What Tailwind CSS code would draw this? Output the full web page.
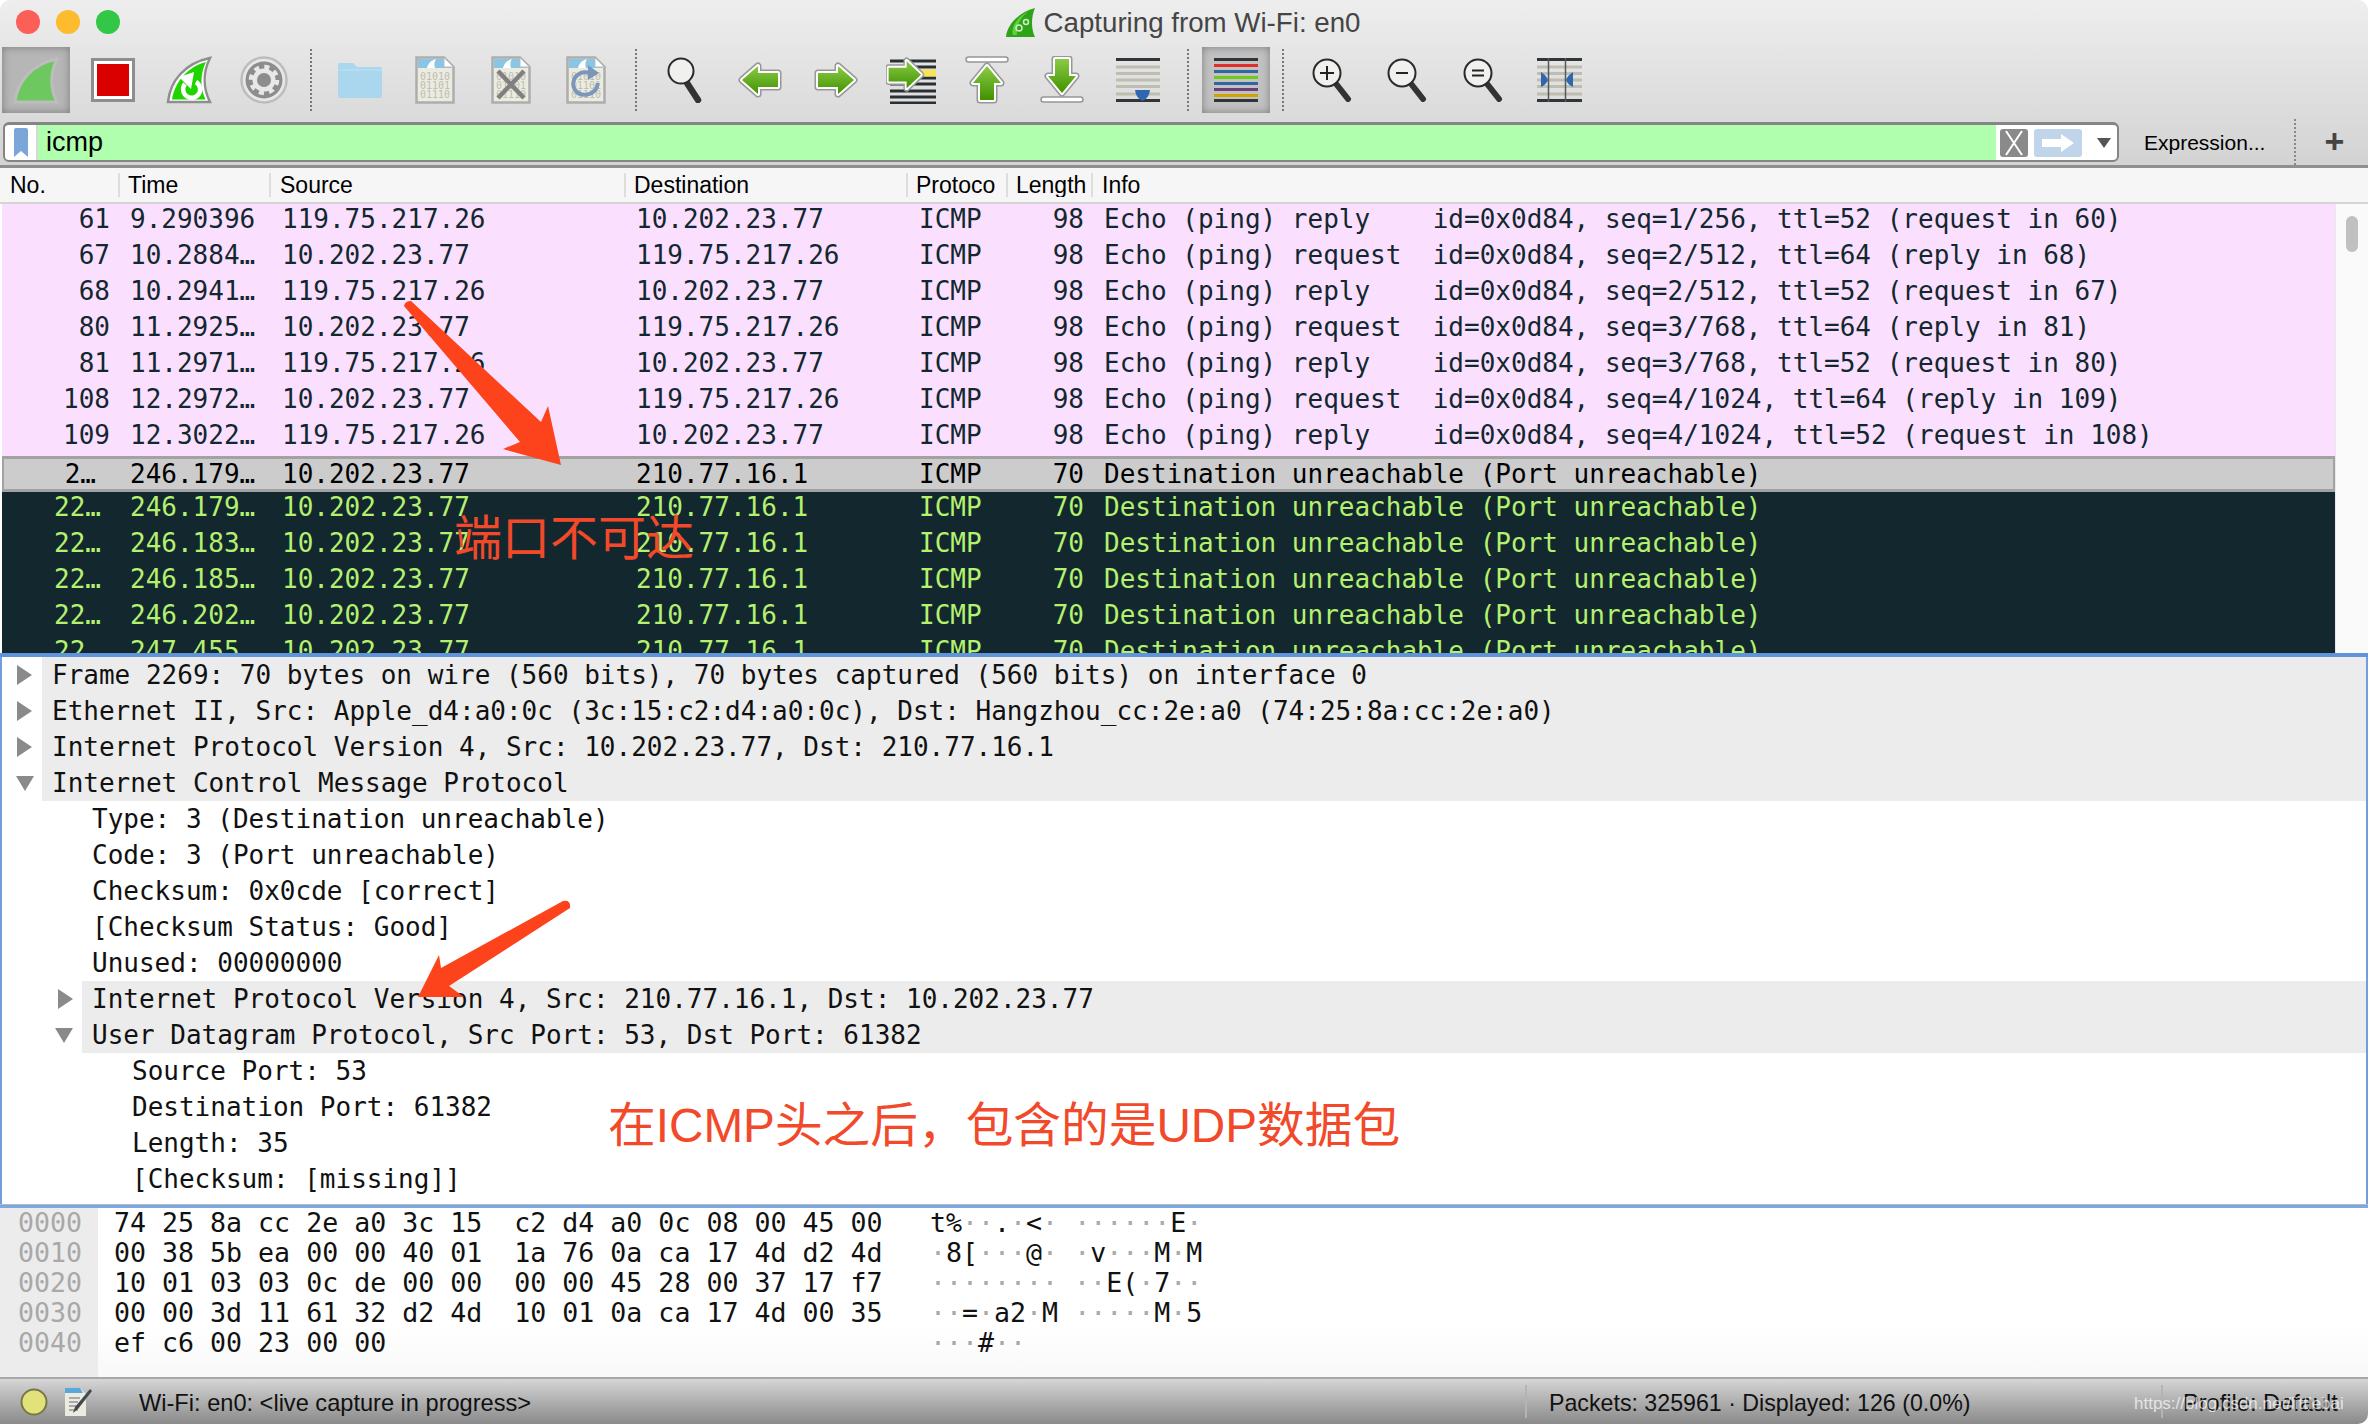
<!DOCTYPE html>
<html lang="en">
<head>
<meta charset="UTF-8">
<title>Capturing from Wi-Fi: en0</title>
<script src="https://cdn.jsdelivr.net/npm/@tailwindcss/browser@4"></script>
</head>
<body class="bg-white overflow-hidden">
<svg class="absolute w-0 h-0">
  <defs>
    <linearGradient id="g" x1="0" y1="0" x2="0" y2="1"><stop offset="0" stop-color="#8ccb45"/><stop offset="1" stop-color="#3f9200"/></linearGradient>
    <path id="al" d="M4 18 L20 4 V11 H40 V25 H20 V32 Z"/>
    <path id="ar" d="M40 18 L24 4 V11 H4 V25 H24 V32 Z"/>
    <path id="au" d="M18 3 L4 20 H11 V37 H25 V20 H32 Z"/>
    <path id="ad" d="M18 37 L4 20 H11 V3 H25 V20 H32 Z"/>
    <symbol id="doc" viewBox="0 0 40 48">
      <path d="M1.5 1.5 H29 L38.5 11 V46.5 H1.5 Z" fill="#ecebdf" stroke="#adadad" stroke-width="2.5"/>
      <path d="M3 3 H28.5 L37 12 H3 Z" fill="#8ac5e6"/>
      <path d="M12 12 C13 7 17 4 21 3 C19 6 19 9 20 12 Z" fill="#fff"/>
      <path d="M29 2 V11 H38" fill="#fff" stroke="#bbb" stroke-width="1"/>
      <text x="5" y="24" font-family="DejaVu Sans Mono" font-size="10" fill="#bdbdb5">01010</text>
      <text x="5" y="33" font-family="DejaVu Sans Mono" font-size="10" fill="#bdbdb5">01101</text>
      <text x="5" y="42" font-family="DejaVu Sans Mono" font-size="10" fill="#bdbdb5">01110</text>
    </symbol>
    <symbol id="mag" viewBox="0 0 42 44">
      <path d="M25 27 L36 41" stroke="#333" stroke-width="6" stroke-linecap="round"/>
      <ellipse cx="15" cy="15" rx="13.5" ry="13.5" fill="#f0f0ee" stroke="#2a2a2a" stroke-width="2"/>
    </symbol>
  </defs>
</svg>

<div class="relative w-[2368px] h-[1424px] flex flex-col overflow-hidden rounded-t-[10px] rounded-br-[10px] font-['Liberation_Sans',sans-serif] text-black">

  <!-- title bar + toolbar -->
  <div class="bg-linear-to-b from-[#eeeeee] to-[#d3d3d3] h-[168px] flex flex-col shrink-0 border-b-[3px] border-[#8f8f8f]">
    <div class="relative h-[47px] flex items-center justify-center">
      <div class="absolute left-[16px] top-[10px] flex gap-[16px]">
        <span class="w-[24px] h-[24px] rounded-full bg-[#fc5f58]"></span>
        <span class="w-[24px] h-[24px] rounded-full bg-[#fdbc2e]"></span>
        <span class="w-[24px] h-[24px] rounded-full bg-[#33c748]"></span>
      </div>
      <div class="flex items-center gap-[8px] -ml-[3px] -mt-[2px]">
        <svg width="31" height="32" viewBox="0 0 31 32">
          <path d="M1 30 C2 18 14 5 30 1 C26 10 26 22 30 30 Z" fill="#2ea31a"/>
          <path d="M8 28 C5 20 14 8 24 4 C15 10 11 20 12 28 Z" fill="#5fd03e"/>
          <circle cx="14" cy="21" r="3" fill="none" stroke="#cdeec4" stroke-width="1.5"/>
          <circle cx="21" cy="15" r="2.5" fill="none" stroke="#cdeec4" stroke-width="1.5"/>
        </svg>
        <span class="text-[27.700px] leading-none text-[#454545]">Capturing from Wi-Fi: en0</span>
      </div>
    </div>

    <div class="flex items-center h-[66px]">
      <div class="w-[75.5px] h-[66px] flex items-center justify-center">
        <div class="-ml-[4px] w-[68px] h-[66px] shrink-0 flex items-center justify-center bg-[#b6b6b6] shadow-[inset_0_0_9px_#7d7d7d]">
          <svg width="46" height="47" viewBox="0 0 46 47"><path d="M2 45 C4 25 19 7 44 2 C37 16 37 32 44 45 Z" fill="#6cc85f" stroke="#bdbdbd" stroke-width="3"/></svg>
        </div>
      </div>
      <div class="w-[75.5px] flex justify-center">
        <div class="w-[44px] h-[44px] border-[3px] border-[#8e8e8e] bg-white p-[3px]"><div class="w-full h-full bg-[#da0000]"></div></div>
      </div>
      <div class="w-[75.5px] flex justify-center">
        <svg width="46" height="48" viewBox="0 0 46 48">
          <path d="M2 46 C4 25 19 7 44 2 C37 16 37 32 44 46 Z" fill="#fff" stroke="#8e8e8e" stroke-width="2.5"/>
          <path d="M6 43.500 C9 26 21 11 40 6 C34 18 34 32 39.500 43.500 Z" fill="#20d400"/>
          <path d="M19 27 A8.500 8.500 0 1 0 30 25" fill="none" stroke="#fff" stroke-width="4.500" transform="translate(0,1)"/>
          <path d="M13 21 L28 16 L25 33 Z" fill="#fff"/>
        </svg>
      </div>
      <div class="w-[75.5px] flex justify-center">
        <svg width="48" height="48" viewBox="0 0 48 48">
          <circle cx="24" cy="24" r="22.500" fill="#e8e8e8" stroke="#bdbdbd" stroke-width="2.500"/>
          <circle cx="24" cy="24" r="18.500" fill="#8d8d8d"/>
          <circle cx="24" cy="24" r="11.500" fill="#e8e8e8"/>
          <circle cx="24" cy="24" r="13" fill="none" stroke="#e8e8e8" stroke-width="4.500" stroke-dasharray="5 5.200"/>
          <circle cx="24" cy="24" r="7" fill="#8d8d8d"/>
        </svg>
      </div>
      <div class="ml-[8px] mr-[10px] w-[2px] h-[62px] border-l-2 border-dotted border-[#777777]"></div>

      <div class="w-[75.5px] flex justify-center">
        <svg width="46" height="37" viewBox="0 0 46 37"><path d="M1 3 Q1 1 3 1 H16 L20 5 H43 Q45 5 45 7 V34 Q45 36 43 36 H3 Q1 36 1 34 Z" fill="#aad6ee"/><path d="M1 9 H45 V7 H1 Z" fill="#b5dcf1"/></svg>
      </div>
      <div class="w-[75.5px] flex justify-center"><svg width="40" height="48"><use href="#doc"/></svg></div>
      <div class="w-[75.5px] flex justify-center">
        <svg width="40" height="48" viewBox="0 0 40 48"><use href="#doc" width="40" height="48"/><path d="M7 15 L33 42 M33 15 L7 42" stroke="#808080" stroke-width="4.5"/></svg>
      </div>
      <div class="w-[75.5px] flex justify-center">
        <svg width="40" height="48" viewBox="0 0 40 48"><use href="#doc" width="40" height="48"/><path d="M25 17 C10 13 4 26 9 34 C15 42 30 40 32 27" fill="none" stroke="#7a96b8" stroke-width="4"/><path d="M22 9 L33 17 L22 24 Z" fill="#7a96b8"/></svg>
      </div>
      <div class="ml-[11px] mr-[10px] w-[2px] h-[62px] border-l-2 border-dotted border-[#777777]"></div>

      <div class="w-[75.5px] flex justify-center"><svg width="36" height="46" viewBox="0 0 36 46"><path d="M20 26 L31 43" stroke="#333" stroke-width="6.5" stroke-linecap="round"/><ellipse cx="14" cy="14" rx="12.5" ry="12.5" fill="#f0f0ee" stroke="#2a2a2a" stroke-width="2"/></svg></div>
      <div class="w-[75.5px] flex justify-center"><svg width="44" height="36" viewBox="0 0 44 36"><use href="#al" fill="#979797" stroke="#979797" stroke-width="7" stroke-linejoin="round"/><use href="#al" fill="#fff" stroke="#fff" stroke-width="4" stroke-linejoin="round"/><use href="#al" fill="url(#g)"/></svg></div>
      <div class="w-[75.5px] flex justify-center"><svg width="44" height="36" viewBox="0 0 44 36"><use href="#ar" fill="#979797" stroke="#979797" stroke-width="7" stroke-linejoin="round"/><use href="#ar" fill="#fff" stroke="#fff" stroke-width="4" stroke-linejoin="round"/><use href="#ar" fill="url(#g)"/></svg></div>
      <div class="w-[75.5px] flex justify-center">
        <svg width="50" height="48" viewBox="0 0 50 48">
          <path d="M4 5 H50 M4 11 H50 M4 22 H50 M4 28 H50 M4 35 H50 M4 41 H50 M4 47 H50" stroke="#2a2f33" stroke-width="3"/>
          <path d="M4 17 H50" stroke="#f7e35a" stroke-width="7"/>
          <g transform="translate(-1,1) scale(0.9,0.98)"><use href="#ar" fill="#979797" stroke="#979797" stroke-width="7" stroke-linejoin="round"/><use href="#ar" fill="#fff" stroke="#fff" stroke-width="4" stroke-linejoin="round"/><use href="#ar" fill="url(#g)"/></g>
        </svg>
      </div>
      <div class="w-[75.5px] flex justify-center">
        <svg width="44" height="48" viewBox="0 0 44 48"><rect x="1" y="1" width="42" height="5" rx="2.5" fill="#fff" stroke="#979797" stroke-width="1.5"/><g transform="translate(4,7) scale(1,1)"><use href="#au" fill="#979797" stroke="#979797" stroke-width="7" stroke-linejoin="round"/><use href="#au" fill="#fff" stroke="#fff" stroke-width="4" stroke-linejoin="round"/><use href="#au" fill="url(#g)"/></g></svg>
      </div>
      <div class="w-[75.5px] flex justify-center">
        <svg width="44" height="48" viewBox="0 0 44 48"><rect x="1" y="41" width="42" height="5" rx="2.5" fill="#fff" stroke="#979797" stroke-width="1.5"/><g transform="translate(4,0)"><use href="#ad" fill="#979797" stroke="#979797" stroke-width="7" stroke-linejoin="round"/><use href="#ad" fill="#fff" stroke="#fff" stroke-width="4" stroke-linejoin="round"/><use href="#ad" fill="url(#g)"/></g></svg>
      </div>
      <div class="w-[75.5px] flex justify-center">
        <svg width="44" height="44" viewBox="0 0 44 44">
          <path d="M0 1.5 H44 M0 42.5 H44" stroke="#30353a" stroke-width="3"/>
          <path d="M0 9 H44 M0 15.500 H44 M0 22 H44 M0 28.500 H44 M0 36 H44" stroke="#bdbdb0" stroke-width="3"/>
          <path d="M19 32 H34 Q33 40 26.500 43 Q20 40 19 32 Z" fill="#2f66ad"/>
        </svg>
      </div>
      <div class="ml-[11.5px] mr-[9.5px] w-[2px] h-[62px] border-l-2 border-dotted border-[#777777]"></div>

      <div class="w-[75.5px] flex justify-center">
        <div class="w-[68px] h-[66px] flex items-center justify-center bg-[#c2c2c2] shadow-[inset_0_0_9px_#7d7d7d]">
          <svg width="44" height="44" viewBox="0 0 44 44">
            <path d="M0 1.5 H44 M0 42.500 H44" stroke="#30353a" stroke-width="3"/>
            <path d="M0 7.500 H44" stroke="#e22d2d" stroke-width="3"/>
            <path d="M0 13.500 H44" stroke="#33669f" stroke-width="3"/>
            <path d="M0 19.500 H44" stroke="#6fcb1a" stroke-width="3"/>
            <path d="M0 25.500 H44" stroke="#33669f" stroke-width="3"/>
            <path d="M0 31.500 H44" stroke="#6c3f78" stroke-width="3"/>
            <path d="M0 37.500 H44" stroke="#cfa300" stroke-width="3"/>
          </svg>
        </div>
      </div>
      <div class="ml-[8px] mr-[11px] w-[2px] h-[62px] border-l-2 border-dotted border-[#777777]"></div>

      <div class="w-[75.5px] flex justify-center"><svg width="42" height="44" viewBox="0 0 42 44"><use href="#mag" width="42" height="44"/><path d="M15 8 V22 M8 15 H22" stroke="#222" stroke-width="2"/></svg></div>
      <div class="w-[75.5px] flex justify-center"><svg width="42" height="44" viewBox="0 0 42 44"><use href="#mag" width="42" height="44"/><path d="M9 15 H21" stroke="#222" stroke-width="2"/></svg></div>
      <div class="w-[75.5px] flex justify-center"><svg width="42" height="44" viewBox="0 0 42 44"><use href="#mag" width="42" height="44"/><path d="M9 12.500 H21 M9 17.500 H21" stroke="#222" stroke-width="2"/></svg></div>
      <div class="w-[75.5px] flex justify-center">
        <svg width="45" height="44" viewBox="0 0 45 44">
          <path d="M0 9 H45 M0 15.500 H45 M0 22 H45 M0 28.500 H45 M0 36 H45" stroke="#bdbdb0" stroke-width="3"/>
          <path d="M0 1.500 H45 M0 42.500 H45" stroke="#30353a" stroke-width="3"/>
          <path d="M11.500 0 V44 M28.500 0 V44" stroke="#55585a" stroke-width="1.500"/>
          <path d="M4 14 Q9 17 11 22 Q9 27 4 29 Z M36 14 Q31 17 29 22 Q31 27 36 29 Z" fill="#2f66ad"/>
        </svg>
      </div>
    </div>

    <!-- display filter -->
    <div class="relative flex items-center h-[40px] mt-[9px] ml-[3px]">
      <div class="flex items-stretch w-[2116px] h-[40px] rounded-[6px] border-[2px] border-t-[3px] border-[#858585] bg-white overflow-hidden">
        <div class="w-[33px] flex items-center justify-center border-r-2 border-[#d8d8d8]">
          <svg width="16" height="29" viewBox="0 0 16 29"><path d="M1 2 Q1 0 3 0 H13 Q15 0 15 2 V29 L8 23 L1 29 Z" fill="#7ba6d8"/></svg>
        </div>
        <div class="w-[1958px] bg-[#afffaf] pl-[8px] flex items-center text-[27px] leading-none">icmp</div>
        <div class="flex items-center pl-[4px] gap-[6px]">
          <div class="w-[28px] h-[28px] rounded-[3px] bg-[#8a8a8a] flex items-center justify-center">
            <svg width="20" height="26" viewBox="0 0 20 26"><path d="M2 1 L18 25 M18 1 L2 25" stroke="#fff" stroke-width="2"/></svg>
          </div>
          <div class="w-[48px] h-[28px] rounded-[3px] bg-[#c0d4ea] flex items-center justify-center">
            <svg width="34" height="20" viewBox="0 0 34 20"><path d="M1 6 H20 V1 L33 10 L20 19 V14 H1 Z" fill="#fff"/></svg>
          </div>
          <svg class="ml-[9px]" width="14" height="10" viewBox="0 0 14 10"><path d="M0 0 H14 L7 10 Z" fill="#555"/></svg>
        </div>
      </div>
      <span class="ml-[25px] text-[21px] leading-none">Expression...</span>
      <div class="ml-[29px] w-[2px] h-[46px] border-l-2 border-dotted border-[#888888]"></div>
      <span class="ml-[28px] text-[34px] font-bold leading-none text-[#444] pb-[3px]">+</span>
    </div>
  </div>

  <!-- packet list -->
  <div class="h-[485px] shrink-0 flex flex-col">
    <div class="h-[36px] shrink-0 flex items-center bg-[#f6f6f6] border-b-[2px] border-[#d4d4d4] text-[23px] leading-[24px]">
      <div class="w-[120px] h-[24px] flex items-center pl-[10px] border-r-2 border-[#dddddd]">No.</div>
      <div class="w-[151px] h-[24px] flex items-center pl-[8px] border-r-2 border-[#dddddd]">Time</div>
      <div class="w-[355px] h-[24px] flex items-center pl-[9px] border-r-2 border-[#dddddd]">Source</div>
      <div class="w-[282px] h-[24px] flex items-center pl-[8px] border-r-2 border-[#dddddd]">Destination</div>
      <div class="w-[100px] h-[24px] flex items-center pl-[8px] border-r-2 border-[#dddddd] overflow-hidden whitespace-nowrap">Protoco</div>
      <div class="w-[85px] h-[24px] flex items-center pl-[8px] border-r-2 border-[#dddddd] overflow-hidden whitespace-nowrap">Length</div>
      <div class="pl-[9px]">Info</div>
    </div>
    <div class="relative flex-1 flex overflow-hidden">
      <div id="packets" class="ml-[2px] w-[2333px] overflow-hidden font-['DejaVu_Sans_Mono',monospace] text-[26px] leading-[36px] whitespace-pre"></div>
      <div class="flex-1 bg-[#fafafa] border-l border-[#e8e8e8] pt-[12px] flex justify-center">
        <div class="w-[12px] h-[36px] rounded-full bg-[#c0c0c0]"></div>
      </div>
    </div>
  </div>
  <div class="h-[4px] shrink-0 bg-[#5f93dc]"></div>

  <!-- packet details -->
  <div id="details" class="h-[547px] shrink-0 overflow-hidden border-x-2 border-[#6f9fe0] font-['DejaVu_Sans_Mono',monospace] text-[26px] leading-[36px] whitespace-pre text-[#111]"></div>
  <div class="h-[1px] shrink-0 bg-[#b9b9b0]"></div>
  <div class="h-[3px] shrink-0 bg-[#7aa7ea]"></div>

  <!-- packet bytes -->
  <div class="h-[169px] shrink-0 flex bg-linear-to-b from-white from-70% to-[#f8f8f8] font-['DejaVu_Sans_Mono',monospace] text-[26.600px] leading-[30px] whitespace-pre">
    <div class="w-[98px] h-full bg-[#ececec] text-[#a8a8a8] pl-[18px]">0000
0010
0020
0030
0040</div>
    <div class="ml-[16px] w-[816px] text-[#111]">74 25 8a cc 2e a0 3c 15  c2 d4 a0 0c 08 00 45 00
00 38 5b ea 00 00 40 01  1a 76 0a ca 17 4d d2 4d
10 01 03 03 0c de 00 00  00 00 45 28 00 37 17 f7
00 00 3d 11 61 32 d2 4d  10 01 0a ca 17 4d 00 35
ef c6 00 23 00 00</div>
    <div class="text-[#111]">t%<span class="text-[#aaa]">··</span>.<span class="text-[#aaa]">·</span>&lt;<span class="text-[#aaa]">· ······</span>E<span class="text-[#aaa]">·</span>
<span class="text-[#aaa]">·</span>8[<span class="text-[#aaa]">···</span>@<span class="text-[#aaa]">· ·</span>v<span class="text-[#aaa]">···</span>M<span class="text-[#aaa]">·</span>M
<span class="text-[#aaa]">········ ··</span>E(<span class="text-[#aaa]">·</span>7<span class="text-[#aaa]">··</span>
<span class="text-[#aaa]">··</span>=<span class="text-[#aaa]">·</span>a2<span class="text-[#aaa]">·</span>M<span class="text-[#aaa]"> ·····</span>M<span class="text-[#aaa]">·</span>5
<span class="text-[#aaa]">···</span>#<span class="text-[#aaa]">··</span></div>
  </div>

  <!-- status bar -->
  <div class="relative flex-1 flex items-center bg-linear-to-b from-[#d6d6d6] to-[#8a8a8a] border-t-[2px] border-[#a8a8a8] text-[23.600px] leading-none text-[#111]">
    <svg class="ml-[20px]" width="28" height="28" viewBox="0 0 28 28"><circle cx="14" cy="14" r="12.500" fill="#e3e27a" stroke="#77774a" stroke-width="2"/></svg>
    <svg class="ml-[16px]" width="28" height="30" viewBox="0 0 28 30">
      <path d="M1 1 H16 L22 7 V29 H1 Z" fill="#ecebdf"/><path d="M1 1 H16 L19 6 H1 Z" fill="#58a8dc"/>
      <path d="M5 11 H16 M5 15 H14 M5 19 H16 M5 23 H14" stroke="#aaa" stroke-width="2"/>
      <path d="M26 2 L11 20 L9 26 L14 22 L28 4 Z" fill="#44484c"/>
    </svg>
    <span class="ml-[47px] w-[1386px] pt-[5px]">Wi-Fi: en0: &lt;live capture in progress&gt;</span>
    <div class="w-[2px] h-[33px] bg-[#b4b4b4]"></div>
    <span class="ml-[22px] w-[612px] pt-[5px] text-[23.200px]">Packets: 325961 · Displayed: 126 (0.0%)</span>
    <div class="w-[2px] h-[33px] bg-[#b4b4b4]"></div>
    <span class="ml-[20px] pt-[5px]">Profile: Default</span>
    <span class="absolute left-[2134px] top-[16px] text-[17px] leading-none text-white/70 whitespace-nowrap">https://blog.csdn.net/littlebai</span>
  </div>

  <!-- annotations drawn on top of the screenshot -->
  <svg class="absolute left-0 top-0 pointer-events-none" width="2368" height="1424" viewBox="0 0 2368 1424">
    <path d="M404 306 Q405 301 411 301 L541 422 L548 406 L561 465 L503 449 L520 442 Z" fill="#fc431c"/>
    <path d="M563 901 Q571 899 570 908 L449 986 L464 997 L418 997 L439 955 L441 968 Z" fill="#fc431c"/>
  </svg>
  <span class="absolute left-[454px] top-[504px] text-[48px] leading-[60px] text-[#f2492a] font-['Noto_Sans_CJK_SC',sans-serif]">端口不可达</span>
  <span class="absolute left-[608px] top-[1096px] text-[47.700px] leading-[60px] text-[#f2492a] whitespace-nowrap font-['Liberation_Sans','Noto_Sans_CJK_SC',sans-serif]">在ICMP头之后，包含的是UDP数据包</span>
</div>

<script>
  const echo = [
    ["61", "9.290396", "119.75.217.26", "10.202.23.77", "Echo (ping) reply    id=0x0d84, seq=1/256, ttl=52 (request in 60)"],
    ["67", "10.2884…", "10.202.23.77", "119.75.217.26", "Echo (ping) request  id=0x0d84, seq=2/512, ttl=64 (reply in 68)"],
    ["68", "10.2941…", "119.75.217.26", "10.202.23.77", "Echo (ping) reply    id=0x0d84, seq=2/512, ttl=52 (request in 67)"],
    ["80", "11.2925…", "10.202.23.77", "119.75.217.26", "Echo (ping) request  id=0x0d84, seq=3/768, ttl=64 (reply in 81)"],
    ["81", "11.2971…", "119.75.217.26", "10.202.23.77", "Echo (ping) reply    id=0x0d84, seq=3/768, ttl=52 (request in 80)"],
    ["108", "12.2972…", "10.202.23.77", "119.75.217.26", "Echo (ping) request  id=0x0d84, seq=4/1024, ttl=64 (reply in 109)"],
    ["109", "12.3022…", "119.75.217.26", "10.202.23.77", "Echo (ping) reply    id=0x0d84, seq=4/1024, ttl=52 (request in 108)"],
  ];
  const unreachable = "Destination unreachable (Port unreachable)";
  const selected = ["2…", "246.179…", "10.202.23.77", "210.77.16.1", unreachable];
  const dark = [
    ["22…", "246.179…"], ["22…", "246.183…"], ["22…", "246.185…"], ["22…", "246.202…"], ["22…", "247.455…"],
  ].map(r => [r[0], r[1], "10.202.23.77", "210.77.16.1", unreachable]);

  function packetRow(r, cls, noCls) {
    return `<div class="flex ${cls}">
      <span class="${noCls} text-right">${r[0]}</span>
      <span class="ml-[20px] w-[152px]">${r[1]}</span>
      <span class="w-[354px]">${r[2]}</span>
      <span class="w-[283px]">${r[3]}</span>
      <span class="w-[110px]">ICMP</span>
      <span class="w-[55px] text-right">${r[4].includes("ping") ? 98 : 70}</span>
      <span class="ml-[20px]">${r[4]}</span>
    </div>`;
  }

  document.getElementById("packets").innerHTML =
    echo.map(r => packetRow(r, "h-[36px] bg-[#fae0fe] text-[#12272e] leading-[31px]", "w-[108px]")).join("") +
    packetRow(selected, "h-[36px] bg-[#cccccc] text-black border-y-[3px] border-x-[2px] border-[#a2a2a2] leading-[30px]", "w-[106px] pr-[14px]") +
    dark.map(r => packetRow(r, "h-[36px] bg-[#12272e] text-[#b5f06f] leading-[31px]", "w-[108px] pr-[9px]")).join("");

  // level: 0 top, 1 nested, 2 nested twice. open: true/false for a tree node, null for a leaf
  const tree = [
    [0, false, "Frame 2269: 70 bytes on wire (560 bits), 70 bytes captured (560 bits) on interface 0"],
    [0, false, "Ethernet II, Src: Apple_d4:a0:0c (3c:15:c2:d4:a0:0c), Dst: Hangzhou_cc:2e:a0 (74:25:8a:cc:2e:a0)"],
    [0, false, "Internet Protocol Version 4, Src: 10.202.23.77, Dst: 210.77.16.1"],
    [0, true, "Internet Control Message Protocol"],
    [1, null, "Type: 3 (Destination unreachable)"],
    [1, null, "Code: 3 (Port unreachable)"],
    [1, null, "Checksum: 0x0cde [correct]"],
    [1, null, "[Checksum Status: Good]"],
    [1, null, "Unused: 00000000"],
    [1, false, "Internet Protocol Version 4, Src: 210.77.16.1, Dst: 10.202.23.77"],
    [1, true, "User Datagram Protocol, Src Port: 53, Dst Port: 61382"],
    [2, null, "Source Port: 53"],
    [2, null, "Destination Port: 61382"],
    [2, null, "Length: 35"],
    [2, null, "[Checksum: [missing]]"],
    [2, null, "[Checksum Status: Not present]"],
  ];
  const closedArrow = `<svg width="15" height="20" viewBox="0 0 15 20"><path d="M0 0 L15 10 L0 20 Z" fill="#8a8a8a"/></svg>`;
  const openArrow = `<svg width="18" height="15" viewBox="0 0 18 15"><path d="M0 0 H18 L9 15 Z" fill="#8a8a8a"/></svg>`;

  document.getElementById("details").innerHTML = tree.map(([level, open, text]) => {
    const arrow = open === null ? "" : (open ? openArrow : closedArrow);
    if (level === 0) return `<div class="flex h-[36px]"><span class="w-[40px] shrink-0 pl-[5px] flex items-center justify-center">${arrow}</span><span class="flex-1 pl-[10px] bg-[#ececec] leading-[36px]">${text}</span></div>`;
    if (level === 1 && open !== null) return `<div class="flex h-[36px]"><span class="w-[80px] shrink-0 flex items-center justify-end pr-[9px]">${arrow}</span><span class="flex-1 pl-[10px] bg-[#ececec] leading-[36px]">${text}</span></div>`;
    if (level === 1) return `<div class="h-[36px] pl-[90px] leading-[36px]">${text}</div>`;
    return `<div class="h-[36px] pl-[130px] leading-[36px]">${text}</div>`;
  }).join("");
</script>
</body>
</html>
